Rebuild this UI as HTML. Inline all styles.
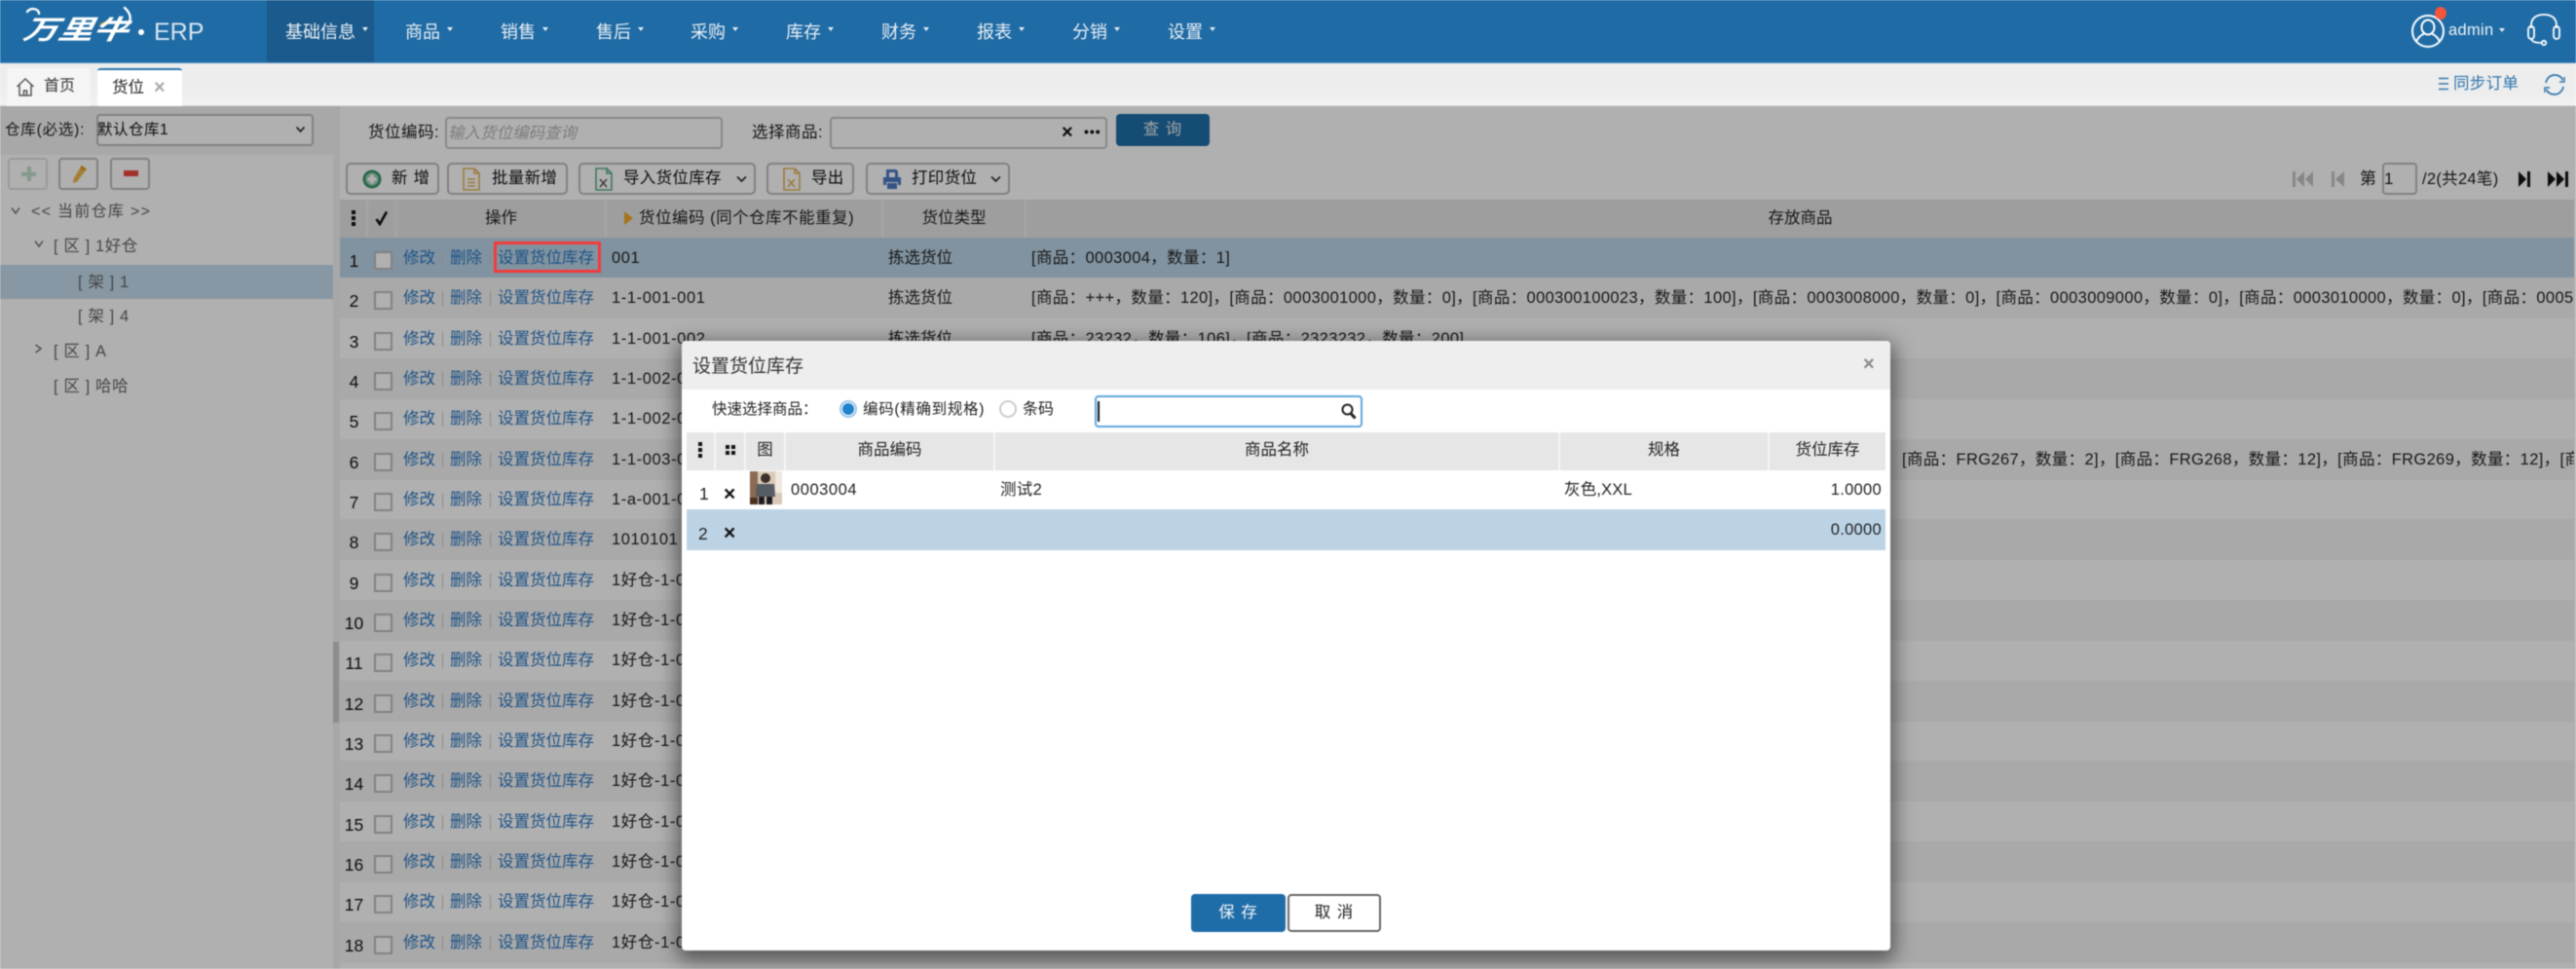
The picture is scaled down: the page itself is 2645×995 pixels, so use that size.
<!DOCTYPE html>
<html lang="zh-CN"><head><meta charset="utf-8"><title>货位</title>
<style>
*{box-sizing:border-box}
html,body{margin:0;padding:0}
html{background:#fff}
body{width:2645px;height:995px;position:relative;overflow:hidden;background:#fff;font:16.5px/20px "Liberation Sans","Noto Sans CJK SC",sans-serif;color:#222;filter:blur(.45px)}
.t{position:absolute;white-space:nowrap;line-height:20px}
.b{position:absolute}
#hdr{position:absolute;left:0;top:0;width:2645px;height:65px;background:#1f6ba5;border-bottom:1px solid #4f90c4}
.nav{position:absolute;top:23px;color:#eaf0f5;font-size:18px;white-space:nowrap;line-height:20px}
.nav:after{content:"";position:absolute;right:-13px;top:5px;border:3px solid transparent;border-top:4px solid #e6eef5;border-bottom:0}
#tabs{position:absolute;left:0;top:65px;width:2645px;height:44px;background:linear-gradient(#ededed 70%,#f3f3f3);border-bottom:1px solid #ddd}
#ov{position:absolute;left:0;top:109px;width:2645px;height:886px;background:rgba(0,0,0,.31)}
.btn{position:absolute;top:167px;height:33px;border:2px solid #bbb;border-radius:5px;background:#fff}
.inp{position:absolute;border:2px solid #c4c4c4;border-radius:4px;background:#fff}
.r{position:absolute;left:349px;width:2294px;height:42px;overflow:hidden}
.r.e{background:#f5f5f5}
.r.s{background:#bcd5e8}
.n{position:absolute;left:0;width:29px;text-align:center;top:14px;font-size:17.5px;line-height:20px;color:#111;font-weight:400}
.c{position:absolute;left:35px;top:14px;width:19px;height:19px;border:2px solid #bbb;background:#fff}
.r a{position:absolute;top:11px;line-height:20px;color:#2b78c2;white-space:nowrap}
.a1{left:65px}.a2{left:113px}.a3{left:162px}
.r u{position:absolute;top:14px;height:15px;width:1px;background:#c9c9c9}
.u1{left:105px}.u2{left:154px}
.k{position:absolute;left:279px;top:11px;line-height:20px;letter-spacing:.6px;white-space:nowrap}
.y{position:absolute;left:563px;top:11px;line-height:20px;white-space:nowrap}
.g{position:absolute;left:710px;top:11px;line-height:20px;letter-spacing:.36px;white-space:nowrap}
.th{position:absolute;top:205px;height:39px;background:#e5e5e5;border-right:2px solid #f0f0f0;text-align:center;line-height:38px;white-space:nowrap;font-size:16.5px}
.mh{position:absolute;top:94px;height:39px;background:#e6e6e6;border-right:2px solid #f5f5f5;text-align:center;line-height:37px;font-size:16.5px;color:#222}
#modal{position:absolute;left:700px;top:350px;width:1241px;height:626px;background:#fff;border-radius:4px;box-shadow:0 6px 20px 4px rgba(0,0,0,.5);overflow:hidden}
#modal .t{color:#222}
</style></head><body>

<div id="hdr">
  <svg class="b" style="left:22px;top:6px" width="124" height="42" viewBox="0 0 124 42"><path d="M6 6C10 1 18 3 18 8 M106 2c9 8 7 18-4 22" fill="none" stroke="#fff" stroke-width="2.4" stroke-linecap="round"/><path d="M80 19l10-5-6 7z" fill="#f2b632"/></svg>
  <div class="t" style="left:24px;top:19px;font-size:36px;font-weight:700;font-style:italic;color:#fff;line-height:24px;transform:skewX(-10deg) scaleY(.76);transform-origin:left center">万里牛</div>
  <div class="b" style="left:142px;top:30px;width:6px;height:6px;border-radius:50%;background:#fff"></div>
  <div class="t" style="left:158px;top:21px;font-size:25px;line-height:24px;color:#d8e6f1">ERP</div>
  <div class="b" style="left:274px;top:0;width:110px;height:64px;background:#1b5a8c"></div>
  <div class="nav" style="left:293px">基础信息</div>
  <div class="nav" style="left:416px">商品</div>
  <div class="nav" style="left:514px">销售</div>
  <div class="nav" style="left:612px">售后</div>
  <div class="nav" style="left:709px">采购</div>
  <div class="nav" style="left:807px">库存</div>
  <div class="nav" style="left:905px">财务</div>
  <div class="nav" style="left:1003px">报表</div>
  <div class="nav" style="left:1101px">分销</div>
  <div class="nav" style="left:1199px">设置</div>
  <svg class="b" style="left:2474px;top:13px" width="38" height="38" viewBox="0 0 38 38" fill="none" stroke="#fff" stroke-width="2"><circle cx="19" cy="19" r="16"/><ellipse cx="19" cy="15" rx="6.5" ry="7.5"/><path d="M7 30c2-6 7-8 9-9M31 30c-2-6-7-8-9-9"/></svg>
  <div class="b" style="left:2500px;top:7px;width:12px;height:13px;border-radius:50%;background:#f4553b"></div>
  <div class="t" style="left:2514px;top:21px;color:#eef4f8;font-size:16.5px;letter-spacing:.3px">admin</div>
  <div class="b" style="left:2566px;top:29px;border:3px solid transparent;border-top:4px solid #e6eef5;border-bottom:0"></div>
  <svg class="b" style="left:2594px;top:13px" width="36" height="34" viewBox="0 0 36 34" fill="none" stroke="#fff" stroke-width="1.8"><path d="M5 16V13C5 5 11 2 18 2s13 3 13 11v3"/><rect x="2" y="14" width="6" height="13" rx="3"/><rect x="28" y="14" width="6" height="13" rx="3"/><path d="M5 27c1 3 5 4 10 4"/><circle cx="18" cy="31" r="2.2"/></svg>
</div>

<div id="tabs">
  <div class="b" style="left:7px;top:5px;width:86px;height:39px;background:#f5f5f5;border-radius:3px 3px 0 0"></div>
  <div class="b" style="left:100px;top:5px;width:87px;height:39px;background:#fff;border-top:2px solid #2a74ad;border-radius:3px 3px 0 0"></div>
  <svg class="b" style="left:16px;top:14px" width="20" height="21" viewBox="0 0 20 21" fill="none" stroke="#555" stroke-width="1.5"><path d="M1.5 10L10 2l8.500 8M4 8.500V19h12V8.500"/><path d="M8.500 19v-5h3v5"/></svg>
  <div class="t" style="left:45px;top:14px;font-size:16px;color:#333">首页</div>
  <div class="t" style="left:115px;top:15px;font-size:16.5px;color:#222">货位</div>
  <div class="t" style="left:158px;top:15px;font-size:20px;font-weight:700;color:#aaa">×</div>
  <svg class="b" style="left:2503px;top:14px" width="12" height="14" viewBox="0 0 12 14" stroke="#2e74ab" stroke-width="1.4"><path d="M1 1.500h10M1 7h10M1 12.500h10"/></svg>
  <div class="t" style="left:2519px;top:11px;font-size:16.5px;color:#2e74ab;letter-spacing:.3px">同步订单</div>
  <svg class="b" style="left:2611px;top:10px" width="24" height="24" viewBox="0 0 24 24" fill="none" stroke="#2e74ab" stroke-width="1.7"><path d="M3 10C4 5 8 2 12 2c4 0 7 2 8.500 5M21 14c-1 5-5 8-9 8-4 0-7-2-8.500-5"/><path d="M22 4v5h-5M2 20v-5h5" stroke-width="1.400"/></svg>
</div>

<!-- left panel -->
<div class="b" style="left:0;top:109px;width:342px;height:886px;background:#fff"></div>
<div class="b" style="left:0;top:109px;width:349px;height:50px;background:#f4f4f4"></div>
<div class="b" style="left:342px;top:109px;width:7px;height:886px;background:#f4f4f4"></div>
<div class="b" style="left:342px;top:659px;width:6px;height:83px;background:#ccc"></div>
<div class="t" style="left:5px;top:124px;font-size:15.5px;letter-spacing:.8px">仓库(必选):</div>
<div class="inp" style="left:99px;top:117px;width:223px;height:33px;border-color:#bbb"></div>
<div class="t" style="left:100px;top:124px;font-size:15.5px;color:#111;letter-spacing:.5px">默认仓库1</div>
<svg class="b" style="left:303px;top:129px" width="11" height="8" viewBox="0 0 11 8" fill="none" stroke="#333" stroke-width="1.700"><path d="M1.500 1.500L5.500 6l4-4.500"/></svg>
<div class="inp" style="left:8px;top:162px;width:41px;height:33px;border-color:#e0e0e0"></div>
<div class="inp" style="left:60px;top:162px;width:41px;height:33px;border-color:#bbb"></div>
<div class="inp" style="left:113px;top:162px;width:41px;height:33px;border-color:#bbb"></div>
<div class="b" style="left:22px;top:177px;width:15px;height:4px;background:#bfe0c8"></div>
<div class="b" style="left:28px;top:171px;width:4px;height:15px;background:#bfe0c8"></div>
<svg class="b" style="left:74px;top:169px" width="16" height="20" viewBox="0 0 18 23"><path d="M11 1l6 4L6 20l-5 2 .500-5z" fill="#f0b74a"/><path d="M11 1l6 4-2 3-6-4z" fill="#e0a030"/></svg>
<div class="b" style="left:127px;top:175px;width:15px;height:6px;background:#e8463a"></div>

<svg class="b" style="left:11px;top:212px" width="10" height="9" viewBox="0 0 10 9" fill="none" stroke="#777" stroke-width="1.500"><path d="M1 1.500L5 7l4-5.500"/></svg>
<div class="t" style="left:32px;top:208px;color:#666;font-size:16px;letter-spacing:1.3px">&lt;&lt; 当前仓库 &gt;&gt;</div>
<svg class="b" style="left:35px;top:246px" width="10" height="9" viewBox="0 0 10 9" fill="none" stroke="#777" stroke-width="1.500"><path d="M1 1.500L5 7l4-5.500"/></svg>
<div class="t" style="left:55px;top:243px;color:#666;font-size:16.5px;letter-spacing:.6px">[ 区 ] 1好仓</div>
<div class="b" style="left:0;top:272px;width:342px;height:35px;background:#c4dcee"></div>
<div class="t" style="left:80px;top:280px;color:#666;font-size:16.5px;letter-spacing:.6px">[ 架 ] 1</div>
<div class="t" style="left:80px;top:315px;color:#666;font-size:16.5px;letter-spacing:.6px">[ 架 ] 4</div>
<svg class="b" style="left:35px;top:353px" width="9" height="10" viewBox="0 0 9 10" fill="none" stroke="#777" stroke-width="1.500"><path d="M1.500 1L7 5 1.500 9"/></svg>
<div class="t" style="left:55px;top:351px;color:#666;font-size:16.5px;letter-spacing:.6px">[ 区 ] A</div>
<div class="t" style="left:55px;top:387px;color:#666;font-size:16.5px;letter-spacing:.6px">[ 区 ] 哈哈</div>

<!-- search -->
<div class="t" style="left:378px;top:126px;font-size:16.5px;letter-spacing:.5px">货位编码:</div>
<div class="inp" style="left:457px;top:120px;width:285px;height:33px"></div>
<div class="t" style="left:460px;top:127px;font-size:16.5px;font-style:italic;color:#b5b5b5">输入货位编码查询</div>
<div class="t" style="left:772px;top:126px;font-size:16.5px;letter-spacing:.5px">选择商品:</div>
<div class="inp" style="left:852px;top:120px;width:285px;height:33px"></div>
<div class="t" style="left:1090px;top:126px;font-weight:700;font-size:20px;color:#111">×</div>
<div class="t" style="left:1113px;top:125px;font-weight:700;font-size:14px;color:#111;letter-spacing:1px">•••</div>
<div class="b" style="left:1146px;top:117px;width:96px;height:33px;background:#1f6ea8;border-radius:4px;text-align:center;color:#eee;line-height:32px;font-size:16.5px;letter-spacing:1px">查 询</div>

<!-- toolbar -->
<div class="btn" style="left:355px;width:96px"></div>
<div class="btn" style="left:459px;width:124px"></div>
<div class="btn" style="left:594px;width:182px"></div>
<div class="btn" style="left:787px;width:90px"></div>
<div class="btn" style="left:889px;width:148px"></div>
<svg class="b" style="left:372px;top:174px" width="20" height="20" viewBox="0 0 20 20"><circle cx="10" cy="10" r="9.500" fill="#3f9a6e"/><circle cx="10" cy="10" r="6.500" fill="#a9cfb8"/><path d="M5.500 10h9M10 5.500v9" stroke="#fff" stroke-width="3.500"/></svg>
<svg class="b" style="left:475px;top:172px" width="18" height="24" viewBox="0 0 18 24" fill="none" stroke="#e3b35a" stroke-width="1.600"><path d="M1 1h11l5 5v17H1zM12 1v5h5M5 12h8M5 15.500h8M5 19h8"/></svg>
<svg class="b" style="left:611px;top:172px" width="18" height="24" viewBox="0 0 18 24" fill="none" stroke="#5cae86" stroke-width="1.600"><path d="M1 1h11l5 5v17H1zM12 1v5h5"/><path d="M5 12l7 8M12 12l-7 8" stroke="#555" stroke-width="1.500"/></svg>
<svg class="b" style="left:804px;top:172px" width="18" height="24" viewBox="0 0 18 24" fill="none" stroke="#e3b35a" stroke-width="1.600"><path d="M1 1h11l5 5v17H1zM12 1v5h5M5 12l7 8M12 12l-7 8"/></svg>
<svg class="b" style="left:906px;top:174px" width="20" height="20" viewBox="0 0 20 20" fill="#4a79c4"><path d="M4 0h10l2 2v6h-3V3H7v5H4z"/><path d="M1 8h18v8h-3v-3H4v3H1z"/><path d="M5 14h10v6H5z"/></svg>
<div class="t" style="left:402px;top:173px;font-size:16.5px;letter-spacing:6px;color:#111">新增</div>
<div class="t" style="left:505px;top:173px;font-size:16.5px;color:#111;letter-spacing:.3px">批量新增</div>
<div class="t" style="left:640px;top:173px;font-size:16.5px;color:#111;letter-spacing:.3px">导入货位库存</div>
<div class="t" style="left:833px;top:173px;font-size:16.5px;color:#111;letter-spacing:.3px">导出</div>
<div class="t" style="left:936px;top:173px;font-size:16.5px;color:#111;letter-spacing:.3px">打印货位</div>
<svg class="b" style="left:756px;top:180px" width="11" height="8" viewBox="0 0 11 8" fill="none" stroke="#333" stroke-width="1.700"><path d="M1 1.500L5.500 6 10 1.500"/></svg>
<svg class="b" style="left:1017px;top:180px" width="11" height="8" viewBox="0 0 11 8" fill="none" stroke="#333" stroke-width="1.700"><path d="M1 1.500L5.500 6 10 1.500"/></svg>

<!-- pager -->
<svg class="b" style="left:2354px;top:175px" width="22" height="18" viewBox="0 0 22 18" fill="#c4c4c4"><path d="M0 1h3v16H0zM12 1v16L4 9zM21 1v16l-8-8z"/></svg>
<svg class="b" style="left:2394px;top:175px" width="14" height="18" viewBox="0 0 14 18" fill="#c4c4c4"><path d="M0 1h3v16H0zM13 1v16L4 9z"/></svg>
<div class="t" style="left:2423px;top:174px;font-size:17px">第</div>
<div class="inp" style="left:2446px;top:167px;width:36px;height:33px;border-color:#bbb"></div>
<div class="t" style="left:2448px;top:174px;font-size:17px">1</div>
<div class="t" style="left:2487px;top:174px;font-size:16.5px;letter-spacing:.3px">/2(共24笔)</div>
<svg class="b" style="left:2585px;top:175px" width="14" height="18" viewBox="0 0 14 18" fill="#111"><path d="M1 1v16l8-8zM10 1h3v16h-3z"/></svg>
<svg class="b" style="left:2616px;top:175px" width="22" height="18" viewBox="0 0 22 18" fill="#111"><path d="M0 1v16l8-8zM9 1v16l8-8zM18 1h3v16h-3z"/></svg>

<!-- table head -->
<div class="th" style="left:349px;width:29px"><svg width="6" height="16" viewBox="0 0 6 16" fill="#111" style="vertical-align:-3px"><rect x="1" y="0" width="4" height="4"/><rect x="1" y="6" width="4" height="4"/><rect x="1" y="12" width="4" height="4"/></svg></div>
<div class="th" style="left:378px;width:30px"><svg width="14" height="16" viewBox="0 0 14 16" fill="none" stroke="#111" stroke-width="2.600" style="vertical-align:-3px"><path d="M1.500 9l3.500 5L12 1.500"/></svg></div>
<div class="th" style="left:408px;width:215px">操作</div>
<div class="th" style="left:623px;width:284px;text-align:left;padding-left:33px;letter-spacing:.5px">货位编码 (同个仓库不能重复)</div>
<div class="b" style="left:641px;top:217px;border:7px solid transparent;border-left:9px solid #f0a92a;border-right:0"></div>
<div class="th" style="left:907px;width:147px">货位类型</div>
<div class="th" style="left:1054px;width:1589px;border-right:0">存放商品</div>

<!-- rows -->
<div class="r s" style="top:244px"><b class="n">1</b><i class="c"></i><a class="a1">修改</a><u class="u1"></u><a class="a2">删除</a><u class="u2"></u><a class="a3">设置货位库存</a><span class="k">001</span><span class="y">拣选货位</span><span class="g">[商品：0003004，数量：1]</span></div>
<div class="r e" style="top:285px"><b class="n">2</b><i class="c"></i><a class="a1">修改</a><u class="u1"></u><a class="a2">删除</a><u class="u2"></u><a class="a3">设置货位库存</a><span class="k">1-1-001-001</span><span class="y">拣选货位</span><span class="g">[商品：+++，数量：120]，[商品：0003001000，数量：0]，[商品：000300100023，数量：100]，[商品：0003008000，数量：0]，[商品：0003009000，数量：0]，[商品：0003010000，数量：0]，[商品：0005001000，数量：0]</span></div>
<div class="r" style="top:327px"><b class="n">3</b><i class="c"></i><a class="a1">修改</a><u class="u1"></u><a class="a2">删除</a><u class="u2"></u><a class="a3">设置货位库存</a><span class="k">1-1-001-002</span><span class="y">拣选货位</span><span class="g">[商品：23232，数量：106]，[商品：2323232，数量：200]</span></div>
<div class="r e" style="top:368px"><b class="n">4</b><i class="c"></i><a class="a1">修改</a><u class="u1"></u><a class="a2">删除</a><u class="u2"></u><a class="a3">设置货位库存</a><span class="k">1-1-002-001</span></div>
<div class="r" style="top:409px"><b class="n">5</b><i class="c"></i><a class="a1">修改</a><u class="u1"></u><a class="a2">删除</a><u class="u2"></u><a class="a3">设置货位库存</a><span class="k">1-1-002-002</span></div>
<div class="r e" style="top:451px"><b class="n">6</b><i class="c"></i><a class="a1">修改</a><u class="u1"></u><a class="a2">删除</a><u class="u2"></u><a class="a3">设置货位库存</a><span class="k">1-1-003-001</span><span class="g" style="left:1604px">[商品：FRG267，数量：2]，[商品：FRG268，数量：12]，[商品：FRG269，数量：12]，[商品：FRG270，数量：12]</span></div>
<div class="r" style="top:492px"><b class="n">7</b><i class="c"></i><a class="a1">修改</a><u class="u1"></u><a class="a2">删除</a><u class="u2"></u><a class="a3">设置货位库存</a><span class="k">1-a-001-001</span></div>
<div class="r e" style="top:533px"><b class="n">8</b><i class="c"></i><a class="a1">修改</a><u class="u1"></u><a class="a2">删除</a><u class="u2"></u><a class="a3">设置货位库存</a><span class="k">1010101</span></div>
<div class="r" style="top:575px"><b class="n">9</b><i class="c"></i><a class="a1">修改</a><u class="u1"></u><a class="a2">删除</a><u class="u2"></u><a class="a3">设置货位库存</a><span class="k">1好仓-1-001</span></div>
<div class="r e" style="top:616px"><b class="n">10</b><i class="c"></i><a class="a1">修改</a><u class="u1"></u><a class="a2">删除</a><u class="u2"></u><a class="a3">设置货位库存</a><span class="k">1好仓-1-001</span></div>
<div class="r" style="top:657px"><b class="n">11</b><i class="c"></i><a class="a1">修改</a><u class="u1"></u><a class="a2">删除</a><u class="u2"></u><a class="a3">设置货位库存</a><span class="k">1好仓-1-001</span></div>
<div class="r e" style="top:699px"><b class="n">12</b><i class="c"></i><a class="a1">修改</a><u class="u1"></u><a class="a2">删除</a><u class="u2"></u><a class="a3">设置货位库存</a><span class="k">1好仓-1-001</span></div>
<div class="r" style="top:740px"><b class="n">13</b><i class="c"></i><a class="a1">修改</a><u class="u1"></u><a class="a2">删除</a><u class="u2"></u><a class="a3">设置货位库存</a><span class="k">1好仓-1-001</span></div>
<div class="r e" style="top:781px"><b class="n">14</b><i class="c"></i><a class="a1">修改</a><u class="u1"></u><a class="a2">删除</a><u class="u2"></u><a class="a3">设置货位库存</a><span class="k">1好仓-1-001</span></div>
<div class="r" style="top:823px"><b class="n">15</b><i class="c"></i><a class="a1">修改</a><u class="u1"></u><a class="a2">删除</a><u class="u2"></u><a class="a3">设置货位库存</a><span class="k">1好仓-1-001</span></div>
<div class="r e" style="top:864px"><b class="n">16</b><i class="c"></i><a class="a1">修改</a><u class="u1"></u><a class="a2">删除</a><u class="u2"></u><a class="a3">设置货位库存</a><span class="k">1好仓-1-001</span></div>
<div class="r" style="top:905px"><b class="n">17</b><i class="c"></i><a class="a1">修改</a><u class="u1"></u><a class="a2">删除</a><u class="u2"></u><a class="a3">设置货位库存</a><span class="k">1好仓-1-001</span></div>
<div class="r e" style="top:947px"><b class="n">18</b><i class="c"></i><a class="a1">修改</a><u class="u1"></u><a class="a2">删除</a><u class="u2"></u><a class="a3">设置货位库存</a><span class="k">1好仓-1-001</span></div>

<div id="ov"></div>
<div class="b" style="left:507px;top:248px;width:110px;height:32px;border:3px solid #f53a3a"></div>

<div id="modal">
  <div class="b" style="left:0;top:0;width:1241px;height:50px;background:#eee"></div>
  <div class="t" style="left:11px;top:17px;font-size:19px;color:#333">设置货位库存</div>
  <div class="t" style="left:1213px;top:14px;font-size:20px;color:#888;font-weight:700">×</div>

  <div class="t" style="left:31px;top:61px;font-size:15.5px">快速选择商品：</div>
  <div class="b" style="left:162px;top:61px;width:18px;height:18px;border-radius:50%;border:2px solid #9cc4e8;background:#fff"></div>
  <div class="b" style="left:165px;top:64px;width:12px;height:12px;border-radius:50%;background:#1e82cc"></div>
  <div class="t" style="left:186px;top:61px;font-size:15.5px;letter-spacing:.7px">编码(精确到规格)</div>
  <div class="b" style="left:326px;top:61px;width:18px;height:18px;border-radius:50%;border:2px solid #ccc;background:#fff"></div>
  <div class="t" style="left:350px;top:61px;font-size:16px">条码</div>
  <div class="b" style="left:424px;top:56px;width:275px;height:33px;border:2px solid #5ca5dc;border-radius:4px;background:#fff"></div>
  <div class="b" style="left:427px;top:62px;width:2px;height:21px;background:#111"></div>
  <svg class="b" style="left:677px;top:64px" width="16" height="17" viewBox="0 0 16 17" fill="none" stroke="#222"><circle cx="6.500" cy="6.500" r="5" stroke-width="2"/><path d="M10 10.500l4.500 5" stroke-width="3"/></svg>

  <div class="mh" style="left:5px;width:30px"><svg width="6" height="16" viewBox="0 0 6 16" fill="#111" style="vertical-align:-3px"><rect x="1" y="0" width="4" height="4"/><rect x="1" y="6" width="4" height="4"/><rect x="1" y="12" width="4" height="4"/></svg></div>
  <div class="mh" style="left:35px;width:31px"><svg width="12" height="12" viewBox="0 0 12 12" fill="#111" style="vertical-align:-1px"><rect x="1" y="1" width="4" height="4"/><rect x="7" y="1" width="4" height="4"/><rect x="1" y="7" width="4" height="4"/><rect x="7" y="7" width="4" height="4"/></svg></div>
  <div class="mh" style="left:66px;width:41px">图</div>
  <div class="mh" style="left:107px;width:215px">商品编码</div>
  <div class="mh" style="left:322px;width:580px">商品名称</div>
  <div class="mh" style="left:902px;width:215px">规格</div>
  <div class="mh" style="left:1117px;width:119px;border-right:0">货位库存</div>

  <div class="t" style="left:18px;top:147px;font-size:17.5px">1</div>
  <div class="t" style="left:43px;top:148px;font-size:21px;font-weight:700;color:#111">×</div>
  <svg class="b" style="left:70px;top:134px" width="33" height="34" viewBox="0 0 33 34"><rect width="33" height="34" fill="#d9c9b8"/><rect x="0" y="0" width="8" height="34" fill="#8a6a52"/><rect x="26" y="0" width="7" height="22" fill="#efe6dc"/><circle cx="16" cy="7" r="5" fill="#3a2f2a"/><path d="M7 13h18l1 13H6z" fill="#555c63"/><path d="M9 26h6v8H9zM17 26h6v8h-6z" fill="#1f1c20"/><rect y="27" width="8" height="7" fill="#4d2f22"/></svg>
  <div class="t" style="left:112px;top:143px;font-size:16.5px;letter-spacing:.55px">0003004</div>
  <div class="t" style="left:327px;top:143px;font-size:16.5px;letter-spacing:.3px">测试2</div>
  <div class="t" style="left:906px;top:143px;font-size:16.5px;letter-spacing:.2px">灰色,XXL</div>
  <div class="t" style="left:1132px;width:100px;text-align:right;top:143px;font-size:16.5px;letter-spacing:.3px">1.0000</div>

  <div class="b" style="left:5px;top:173px;width:1231px;height:42px;background:#bcd3e6"></div>
  <div class="t" style="left:17px;top:188px;font-size:17.5px">2</div>
  <div class="t" style="left:43px;top:188px;font-size:21px;font-weight:700;color:#111">×</div>
  <div class="t" style="left:1132px;width:100px;text-align:right;top:184px;font-size:16.5px;letter-spacing:.3px">0.0000</div>

  <div class="b" style="left:523px;top:568px;width:97px;height:39px;background:#1f6da8;border-radius:4px;color:#f2f6fa;text-align:center;line-height:38px;font-size:16.5px;letter-spacing:1px">保 存</div>
  <div class="b" style="left:622px;top:568px;width:96px;height:39px;background:#fff;border:2px solid #666;border-radius:4px;color:#222;text-align:center;line-height:35px;font-size:16.5px;letter-spacing:1px">取 消</div>
</div>
</body></html>
